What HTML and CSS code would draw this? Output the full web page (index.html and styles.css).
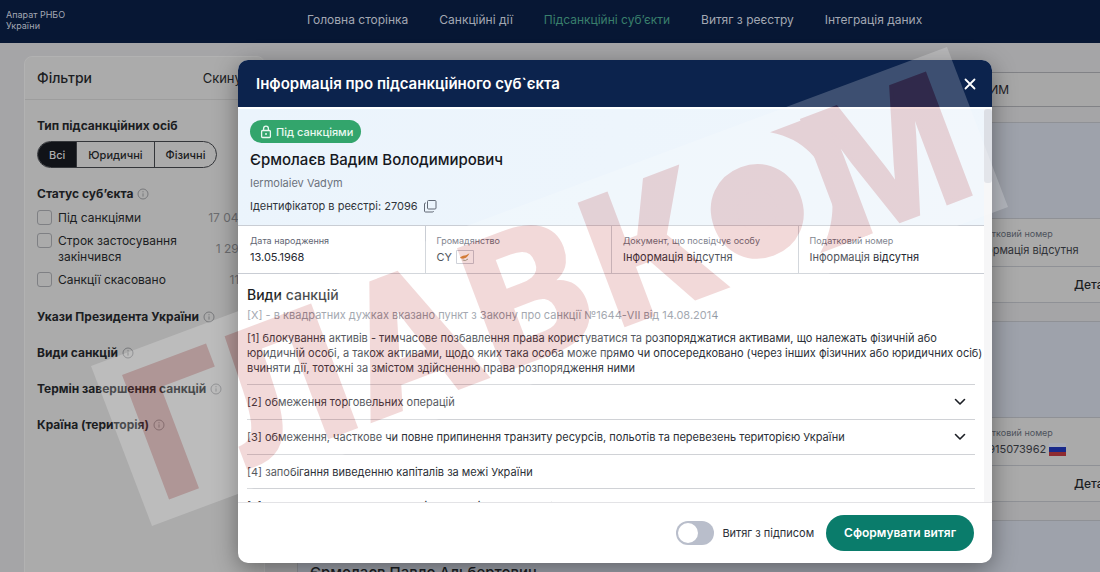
FILE: index.html
```html
<!DOCTYPE html>
<html lang="uk">
<head>
<meta charset="utf-8">
<title>Інформація про підсанкційного суб`єкта</title>
<link rel="stylesheet" href="styles.css">
</head>
<body>
<svg class="sprite" aria-hidden="true">
  <symbol id="info" viewBox="0 0 12 12"><circle cx="6" cy="6" r="5" fill="none" stroke="currentColor"/><path d="M6 5.4v3.2M6 3.2v1.1" stroke="currentColor" fill="none"/></symbol>
  <symbol id="chevron" viewBox="0 0 12 12"><path d="M1.5 3.5 6 8l4.500-4.500" fill="none" stroke="currentColor" stroke-width="1.600" stroke-linecap="round" stroke-linejoin="round"/></symbol>
</svg>

<header class="topbar">
  <a class="brand" href="#">Апарат РНБО<br>України</a>
  <nav class="nav">
    <a href="#">Головна сторінка</a>
    <a href="#">Санкційні дії</a>
    <a class="current" href="#">Підсанкційні суб’єкти</a>
    <a href="#">Витяг з реєстру</a>
    <a href="#">Інтеграція даних</a>
  </nav>
</header>

<div class="page">
  <aside class="filters">
    <div class="filters-head"><h2>Фільтри</h2><button type="button">Скинути</button></div>
    <div class="filters-body">
      <h3>Тип підсанкційних осіб</h3>
      <div class="segments">
        <button type="button" class="active">Всі</button><button type="button">Юридичні</button><button type="button">Фізичні</button>
      </div>
      <h3 class="status-title">Статус суб’єкта <svg class="info"><use href="#info"/></svg></h3>
      <div class="checks">
        <label><input type="checkbox"><span>Під санкціями</span><em>17 043</em></label>
        <label><input type="checkbox"><span>Строк застосування закінчився</span><em>1 295</em></label>
        <label><input type="checkbox"><span>Санкції скасовано</span><em>117</em></label>
      </div>
      <div class="groups">
        <h3>Укази Президента України <svg class="info"><use href="#info"/></svg></h3>
        <h3>Види санкцій <svg class="info"><use href="#info"/></svg></h3>
        <h3>Термін завершення санкцій <svg class="info"><use href="#info"/></svg></h3>
        <h3>Країна (територія) <svg class="info"><use href="#info"/></svg></h3>
      </div>
    </div>
  </aside>

  <main class="results">
    <div class="search"><input type="text" value="ЄРМОЛАЄВ ВАДИМ" aria-label="Пошук"></div>
    <article class="card">
      <div class="card-head"></div>
      <div class="card-row"><div class="cell"><span>Податковий номер</span><b>Інформація відсутня</b></div></div>
      <div class="card-foot"><a href="#">Детальніше</a></div>
    </article>
    <article class="card">
      <div class="card-head"></div>
      <div class="card-row"><div class="cell"><span>Податковий номер</span><b>773915073962 <svg class="flag" viewBox="0 0 17 13"><path fill="#a9adb8" d="M0 0h17v13H0z"/><path fill="#18288a" d="M0 4h17v5H0z"/><path fill="#8e2b31" d="M0 9h17v4H0z"/></svg></b></div></div>
      <div class="card-foot"><a href="#">Детальніше</a></div>
    </article>
    <article class="card">
      <div class="card-head"><h2>Єрмолаєв Павло Альбертович</h2></div>
    </article>
  </main>
</div>

<div class="overlay">
  <section class="modal" role="dialog" aria-labelledby="modal-title">
    <header class="modal-head">
      <h1 id="modal-title">Інформація про підсанкційного суб`єкта</h1>
      <button type="button" class="close" aria-label="Закрити"><svg viewBox="0 0 12 12"><path d="M1.500 1.500l9 9M10.500 1.500l-9 9" fill="none" stroke="currentColor" stroke-width="1.800" stroke-linecap="round"/></svg></button>
    </header>
    <div class="modal-scroll">
      <div class="modal-content">
        <div class="hero">
          <span class="badge"><svg viewBox="0 0 12 14"><rect x="1.600" y="5.500" width="8.800" height="7" rx="1" fill="none" stroke="currentColor" stroke-width="1.300"/><path d="M3.600 5.500V3.600a2.400 2.400 0 0 1 4.800 0v1.900" fill="none" stroke="currentColor" stroke-width="1.300"/><circle cx="6" cy="9" r="1" fill="currentColor"/></svg>Під санкціями</span>
          <h2>Єрмолаєв Вадим Володимирович</h2>
          <p class="latin">Iermolaiev Vadym</p>
          <p class="ident">Ідентифікатор в реєстрі: 27096 <button type="button" aria-label="Копіювати"><svg viewBox="0 0 14 14"><rect x="4.500" y="1.500" width="8.500" height="8.500" rx="1" fill="none" stroke="currentColor"/><path d="M3 4H2.500a1 1 0 0 0-1 1v7a1 1 0 0 0 1 1h7a1 1 0 0 0 1-1" fill="none" stroke="currentColor"/></svg></button></p>
        </div>
        <div class="facts">
          <div><span>Дата народження</span><b>13.05.1968</b></div>
          <div><span>Громадянство</span><b>CY <svg class="flag cyprus" viewBox="0 0 18 14"><path fill="#fff" stroke="#c4c7d0" d="M.5.500h17v13H.500z"/><path fill="#d98a35" d="M4 7.200l3-1.500 3-.5 3.500-2-1.500 2.500-2 2-3 1-2.500-.5z"/><path d="M6.500 10q3 1.500 5.500-1" fill="none" stroke="#9aa38a"/></svg></b></div>
          <div><span>Документ, що посвідчує особу</span><b>Інформація відсутня</b></div>
          <div><span>Податковий номер</span><b>Інформація відсутня</b></div>
        </div>
        <div class="sanctions">
          <h3>Види санкцій</h3>
          <p class="note">[X] - в квадратних дужках вказано пункт з Закону про санкції №1644-VII від 14.08.2014</p>
          <ul>
            <li class="long"><p>[1] блокування активів - тимчасове позбавлення права користуватися та розпоряджатися активами, що належать фізичній або юридичній особі, а також активами, щодо яких така особа може прямо чи опосередковано (через інших фізичних або юридичних осіб) вчиняти дії, тотожні за змістом здійсненню права розпорядження ними</p></li>
            <li>[2] обмеження торговельних операцій <svg><use href="#chevron"/></svg></li>
            <li>[3] обмеження, часткове чи повне припинення транзиту ресурсів, польотів та перевезень територією України <svg><use href="#chevron"/></svg></li>
            <li>[4] запобігання виведенню капіталів за межі України</li>
            <li>[5] зупинення виконання економічних та фінансових зобов’язань</li>
          </ul>
        </div>
      </div>
      <div class="track"><div class="thumb"></div></div>
    </div>
    <footer class="modal-foot">
      <label class="switch"><input type="checkbox" role="switch"><span>Витяг з підписом</span></label>
      <button type="button" class="primary">Сформувати витяг</button>
    </footer>
  </section>
</div>

<svg class="watermark" viewBox="90 44 920 484" role="img" aria-label="ГЛАВКОМ">
  <g class="mark" opacity=".2">
    <path fill="#fff" d="M91 366 947 47 1008 207 152 526z"/>
    <g transform="translate(170 499) rotate(-20.700)" fill="#c04444">
      <text class="mark-text" x="-11 79 215 347 476" y="0">ГЛАВК</text>
      <text class="mark-o" x="651" y="-39" text-anchor="middle">О</text>
      <circle cx="651" cy="-62" r="20"/>
      <text class="mark-m" x="713" y="-2">М</text>
      <path d="M691-131C722-112 728-85 728-64S716-18 695 0H748V-131z"/>
    </g>
  </g>
</svg>
</body>
</html>
```
FILE: styles.css
```css
* { box-sizing: border-box; }
body { margin: 0; height: 100vh; overflow: hidden; position: relative; background: #a5a5a7; color: #1b1d22; font-family: Inter, "Noto Sans", sans-serif; font-size: 11px; line-height: 14px; }
h1, h2, h3, p, ul { margin: 0; padding: 0; }
button { font: inherit; color: inherit; background: none; border: 0; padding: 0; }
a { color: inherit; text-decoration: none; }
.sprite { position: absolute; width: 0; height: 0; }

.topbar { display: flex; align-items: center; height: 43px; padding: 0 6px; background: #071734; color: #a3a8b3; }
.brand { width: 301px; font-size: 9px; line-height: 11px; padding-bottom: 4px; }
.nav { display: flex; gap: 31px; font-size: 12px; line-height: 16px; padding-bottom: 3px; }
.nav .current { color: #397f6c; }

.page { display: flex; gap: 32px; height: calc(100vh - 43px); padding: 13px 0 0 24px; overflow: hidden; }
.filters { flex: none; width: 241px; height: 560px; background: #ababab; border: 1px solid #b2b2b2; border-radius: 8px 8px 0 0; }
.filters-head { display: flex; justify-content: space-between; align-items: center; height: 43px; padding: 0 8px 0 12px; border-bottom: 1px solid #9d9d9d; font-size: 13px; }
.filters h2 { font-size: 14px; font-weight: 500; }
.filters-body { padding: 18px 12px; }
.filters h3 { display: flex; align-items: center; gap: 4px; font-size: 12px; line-height: 16px; font-weight: 700; }
.info { width: 12px; height: 12px; color: #77787b; }
.segments { display: inline-flex; margin-top: 7px; border: 1px solid #34363a; border-radius: 14px; overflow: hidden; font-weight: 500; }
.segments button { height: 25px; padding: 0 11px; }
.segments button + button { border-left: 1px solid #34363a; }
.segments .active { background: #111318; color: #adadad; }
.filters .status-title { margin-top: 18px; }
.checks { display: grid; gap: 7px; margin-top: 8px; font-size: 12px; line-height: 16px; }
.checks label { display: flex; align-items: flex-start; gap: 6px; padding-right: 6px; }
.checks input { appearance: none; flex: none; width: 15px; height: 15px; margin: 0; border: 1px solid #7f8084; border-radius: 3px; }
.checks span { width: 136px; }
.checks em { margin-left: auto; align-self: center; font-style: normal; color: #6c6d70; }
.groups { display: grid; gap: 20px; margin-top: 21px; }

.results { flex: none; width: 850px; }
.search { display: flex; padding: 16px 0 0 580px; }
.search input { width: 100%; height: 35px; padding: 0 12px; border: 1px solid #818286; background: #a7a7a7; color: #1e2025; font: 12px Inter, sans-serif; }
.card { margin-top: 15px; border: 1px solid #8f9196; background: #aaa; }
.card + .card { margin-top: 18px; }
.card-head { height: 95px; padding: 43px 12px 0; background: #9ea2ab; }
.card-head h2 { font-size: 15px; line-height: 18px; font-weight: 500; }
.card-row { display: flex; height: 49px; border-block: 1px solid #8f9196; padding: 9px 0 0 671px; color: #303238; }
.cell { display: grid; align-content: start; gap: 3px; }
.cell span { font-size: 9px; line-height: 12px; color: #4d525c; }
.cell b { display: flex; align-items: center; gap: 3px; font-weight: 400; }
.flag { width: 17px; height: 13px; }
.card-foot { display: flex; align-items: center; height: 35px; padding-left: 776px; font-size: 12px; font-weight: 500; }

.overlay { position: absolute; inset: 0; padding: 60px 108px 9px 238px; }
.modal { display: flex; flex-direction: column; height: 100%; overflow: hidden; border-radius: 10px; background: #fff; box-shadow: 0 6px 24px rgba(0, 0, 0, .4); }
.modal-head { flex: none; display: flex; align-items: center; justify-content: space-between; height: 47px; padding: 0 16px 0 18px; background: #0c234d; color: #fff; }
.modal-head h1 { font-size: 15px; line-height: 20px; font-weight: 600; }
.close { display: flex; }
.close svg { width: 12px; height: 12px; }
.modal-scroll { flex: 1; min-height: 0; display: flex; padding-top: 2px; border-bottom: 1px solid #e3e3e6; }
.modal-content { flex: 1; overflow: hidden; }
.track { width: 8px; background: #f6f6f7; }
.thumb { height: 74px; background: #dcdfe5; border-radius: 3px; }
.hero { height: 117px; padding: 11px 12px 0; background: linear-gradient(100deg, #ebf4fc, #eff6fc); border-bottom: 1px solid #c9cdd4; color: #30343b; }
.badge { display: inline-flex; align-items: center; gap: 4px; height: 23px; padding: 0 8px 0 10px; border-radius: 12px; background: #33a56c; color: #e9f8f0; font-weight: 500; }
.badge svg { width: 12px; height: 14px; }
.hero h2 { margin-top: 7px; font-size: 15px; line-height: 20px; font-weight: 500; color: #16181d; }
.latin { margin-top: 6px; color: #6b727d; }
.ident { display: flex; align-items: center; gap: 5px; margin-top: 9px; }
.ident button { display: flex; color: #626975; }
.ident svg { width: 14px; height: 14px; }
.facts { display: grid; grid-template-columns: repeat(4, 1fr); height: 48px; border-bottom: 1px solid #c9cdd4; }
.facts div { padding: 9px 12px 0; }
.facts div + div { padding-left: 11px; border-left: 1px solid #c9cdd4; }
.facts span { display: block; font-size: 9px; line-height: 12px; color: #5f6673; }
.facts b { display: flex; align-items: center; gap: 4px; height: 14px; margin-top: 3px; font-weight: 400; color: #252932; }
.facts .cyprus { width: 18px; height: 14px; }
.sanctions { padding: 12px 9px 0; color: #2b2f37; }
.sanctions h3 { font-size: 14px; line-height: 18px; font-weight: 500; color: #1c1f25; }
.note { margin-top: 4px; color: #8d939d; }
.sanctions ul { margin-top: 9px; list-style: none; }
.sanctions li { display: flex; align-items: center; justify-content: space-between; height: 35px; border-bottom: 1px solid #d0d2d6; }
.sanctions .long { display: block; height: auto; padding-bottom: 8px; line-height: 15px; }
.sanctions .long p { margin-right: -9px; }
.sanctions li:nth-child(n + 4) { height: 34px; }
.sanctions li svg { width: 12px; height: 12px; margin-right: 9px; color: #1c1f25; }
.modal-foot { flex: none; display: flex; align-items: center; justify-content: flex-end; gap: 12px; height: 60px; padding-right: 18px; color: #2b2f37; }
.switch { display: flex; align-items: center; gap: 8px; }
.switch input { appearance: none; width: 38px; height: 24px; margin: 0; padding: 2px; border-radius: 12px; background: #b9becb; }
.switch input::before { content: ""; display: block; width: 20px; height: 20px; border-radius: 50%; background: #fff; }
.primary { height: 36px; padding: 0 18px; border-radius: 18px; background: #0a7c6b; color: #fff; font-size: 12px; font-weight: 600; }

.watermark { position: absolute; left: 90px; top: 44px; width: 920px; height: 484px; pointer-events: none; }
.mark-text { font: 900 187px Roboto, sans-serif; }
.mark-o { font: 900 62px Inter, sans-serif; stroke: #c04444; stroke-width: 48px; stroke-linejoin: round; }
.mark-m { font: 700 187px "Liberation Sans", sans-serif; stroke: #c04444; stroke-width: 4px; }
```
